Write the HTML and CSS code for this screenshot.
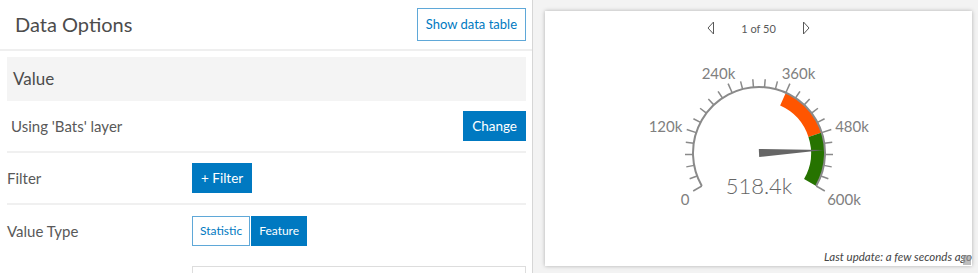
FILE: index.html
```html
<!doctype html>
<html>
<head>
<meta charset="UTF-8">
<title>Data Options</title>
<link rel="stylesheet" href="styles.css">
</head>
<body>
	<div class="layout">
		<div class="options">
			<div class="options-head">
				<h2 class="title">Data Options</h2>
				<button class="btn btn-outline btn-table">Show data table</button>
			</div>
			<div class="options-body">
				<div class="section">Value</div>
				<div class="row row-layer">
					<span class="layer-name">Using 'Bats' layer</span>
					<button class="btn btn-fill">Change</button>
				</div>
				<div class="row">
					<span class="label">Filter</span>
					<button class="btn btn-fill">+ Filter</button>
				</div>
				<div class="row row-last">
					<span class="label">Value Type</span>
					<div class="segment">
						<button class="btn btn-outline">Statistic</button>
						<button class="btn btn-fill">Feature</button>
					</div>
				</div>
				<div class="row row-input">
					<span class="label"></span>
					<div class="input"></div>
				</div>
			</div>
		</div>

		<div class="preview">
			<div class="card">
				<div class="pager">
					<svg class="arrow" width="8" height="14" viewBox="0 0 8 14"><polygon points="6.5,1 6.5,13 1,7" fill="none" stroke="#595959" stroke-width="1"/></svg>
					<span class="pager-text">1 of 50</span>
					<svg class="arrow" width="8" height="14" viewBox="0 0 8 14"><polygon points="1.5,1 1.5,13 7,7" fill="none" stroke="#595959" stroke-width="1"/></svg>
				</div>
				<svg class="gauge" width="260" height="166" viewBox="0 0 260 166">
					<!-- bands -->
					<path d="M154.0 54.1 A59 59 0 0 1 186.11 89.77" fill="none" stroke="#ff5500" stroke-width="14"/>
					<path d="M186.11 89.77 A59 59 0 0 1 181.10 137.5" fill="none" stroke="#267300" stroke-width="14"/>
					<!-- scale -->
					<path d="M72.84 141 A66 66 0 1 1 187.16 141" fill="none" stroke="#8a8a8a" stroke-width="2"/>
					<g stroke="#8a8a8a" stroke-width="1.5">
						<line x1="130" y1="42" x2="130" y2="32" transform="rotate(-120 130 108)"/>
						<line x1="130" y1="42" x2="130" y2="34" transform="rotate(-110.4 130 108)"/>
						<line x1="130" y1="42" x2="130" y2="34" transform="rotate(-100.8 130 108)"/>
						<line x1="130" y1="42" x2="130" y2="34" transform="rotate(-91.2 130 108)"/>
						<line x1="130" y1="42" x2="130" y2="34" transform="rotate(-81.6 130 108)"/>
						<line x1="130" y1="42" x2="130" y2="32" transform="rotate(-72 130 108)"/>
						<line x1="130" y1="42" x2="130" y2="34" transform="rotate(-62.4 130 108)"/>
						<line x1="130" y1="42" x2="130" y2="34" transform="rotate(-52.8 130 108)"/>
						<line x1="130" y1="42" x2="130" y2="34" transform="rotate(-43.2 130 108)"/>
						<line x1="130" y1="42" x2="130" y2="34" transform="rotate(-33.6 130 108)"/>
						<line x1="130" y1="42" x2="130" y2="32" transform="rotate(-24 130 108)"/>
						<line x1="130" y1="42" x2="130" y2="34" transform="rotate(-14.4 130 108)"/>
						<line x1="130" y1="42" x2="130" y2="34" transform="rotate(-4.8 130 108)"/>
						<line x1="130" y1="42" x2="130" y2="34" transform="rotate(4.8 130 108)"/>
						<line x1="130" y1="42" x2="130" y2="34" transform="rotate(14.4 130 108)"/>
						<line x1="130" y1="42" x2="130" y2="32" transform="rotate(24 130 108)"/>
						<line x1="130" y1="42" x2="130" y2="34" transform="rotate(33.6 130 108)"/>
						<line x1="130" y1="42" x2="130" y2="34" transform="rotate(43.2 130 108)"/>
						<line x1="130" y1="42" x2="130" y2="34" transform="rotate(52.8 130 108)"/>
						<line x1="130" y1="42" x2="130" y2="34" transform="rotate(62.4 130 108)"/>
						<line x1="130" y1="42" x2="130" y2="32" transform="rotate(72 130 108)"/>
						<line x1="130" y1="42" x2="130" y2="34" transform="rotate(81.6 130 108)"/>
						<line x1="130" y1="42" x2="130" y2="34" transform="rotate(91.2 130 108)"/>
						<line x1="130" y1="42" x2="130" y2="34" transform="rotate(100.8 130 108)"/>
						<line x1="130" y1="42" x2="130" y2="34" transform="rotate(110.4 130 108)"/>
						<line x1="130" y1="42" x2="130" y2="32" transform="rotate(120 130 108)"/>
					</g>
					<!-- labels -->
					<g class="gauge-labels" text-anchor="middle">
						<text x="56" y="160">0</text>
						<text x="36.5" y="87">120k</text>
						<text x="89.5" y="34">240k</text>
						<text x="169.5" y="34">360k</text>
						<text x="223" y="87">480k</text>
						<text x="215" y="160">600k</text>
					</g>
					<!-- needle -->
					<polygon points="129.8,104 130.2,112 195,105" fill="#666"/>
					<text class="gauge-value" x="130" y="149" text-anchor="middle">518.4k</text>
				</svg>
				<div class="card-foot">Last update: a few seconds ago</div>
				<div class="grip"></div>
			</div>
		</div>
	</div>
</body>
</html>
```

FILE: styles.css
```css
* { box-sizing: border-box }
html, body {
	margin: 0;
	height: 100%;
	overflow: hidden;
	background: #fff;
	font-family: Lato, "Open Sans", sans-serif;
	color: #595959;
}
.layout {
	display: flex;
	height: 273px;
}
.options {
	width: 533px;
	flex: none;
	border-right: 1px solid #d6d6d6;
	overflow: hidden;
}
.options-head {
	display: flex;
	align-items: center;
	justify-content: space-between;
	height: 51px;
	padding: 0 6px 2px 15px;
	border-bottom: 2px solid #efefef;
}
.title {
	margin: 0;
	font-size: 20px;
	font-weight: 400;
	color: #4c4c4c;
}
.btn {
	font-family: inherit;
	font-size: 13px;
	height: 30px;
	padding: 0 8px;
	border: 1px solid #0079c1;
	border-radius: 0;
	cursor: pointer;
}
.btn-fill {
	background: #0079c1;
	color: #fff;
	font-size: 13.5px;
}
.btn-outline {
	background: #fff;
	color: #0079c1;
	border-color: #5fa8d8;
}
.btn-table {
	height: 33px;
	margin-top: 1px;
}
.options-body {
	padding: 6px 6px 0 7px;
}
.section {
	height: 44px;
	line-height: 44px;
	padding-left: 6px;
	background: #f4f4f4;
	font-size: 17px;
	color: #4c4c4c;
}
.row {
	display: flex;
	align-items: center;
	height: 52px;
	border-bottom: 2px solid #f0f0f0;
	font-size: 15px;
}
.row-layer {
	justify-content: space-between;
	padding-left: 4px;
}
.row .label {
	width: 185px;
	flex: none;
}
.row-last {
	border-bottom: 0;
	height: 50px;
	padding-top: 1px;
}
.row-input {
	border-bottom: 0;
	align-items: flex-start;
	padding-top: 11px;
}
.segment {
	display: flex;
	gap: 1px;
}
.segment .btn {
	font-size: 12px;
	padding: 0 7px;
}
.input {
	flex: 1;
	height: 32px;
	border: 1px solid #ddd;
}
.preview {
	flex: 1;
	background: #f3f3f3;
	padding: 11px 6px 7px 12px;
}
.card {
	position: relative;
	height: 100%;
	background: #fff;
	box-shadow: 0 0 4px rgba(0, 0, 0, 0.28);
	display: flex;
	flex-direction: column;
	align-items: center;
	overflow: hidden;
}
.pager {
	display: flex;
	align-items: center;
	gap: 26px;
	height: 32px;
	margin-top: 1px;
	font-size: 11px;
	color: #595959;
}
.pager-text {
	width: 35px;
	text-align: center;
}
.gauge {
	margin-top: 1px;
	display: block;
}
.gauge-labels {
	font-family: Lato, sans-serif;
	font-size: 15px;
	fill: #808080;
}
.gauge-value {
	font-family: Lato, sans-serif;
	font-size: 22px;
	font-weight: 300;
	fill: #666;
}
.card-foot {
	margin-top: auto;
	align-self: stretch;
	text-align: right;
	white-space: nowrap;
	padding: 0 0 3px;
	font-size: 11.5px;
	font-style: italic;
	color: #444;
}
.grip {
	position: absolute;
	right: 1px;
	bottom: 1px;
	width: 8px;
	height: 10px;
	background: radial-gradient(circle, #999 0.6px, transparent 0.9px) 0 0 / 2px 2px;
}
```
